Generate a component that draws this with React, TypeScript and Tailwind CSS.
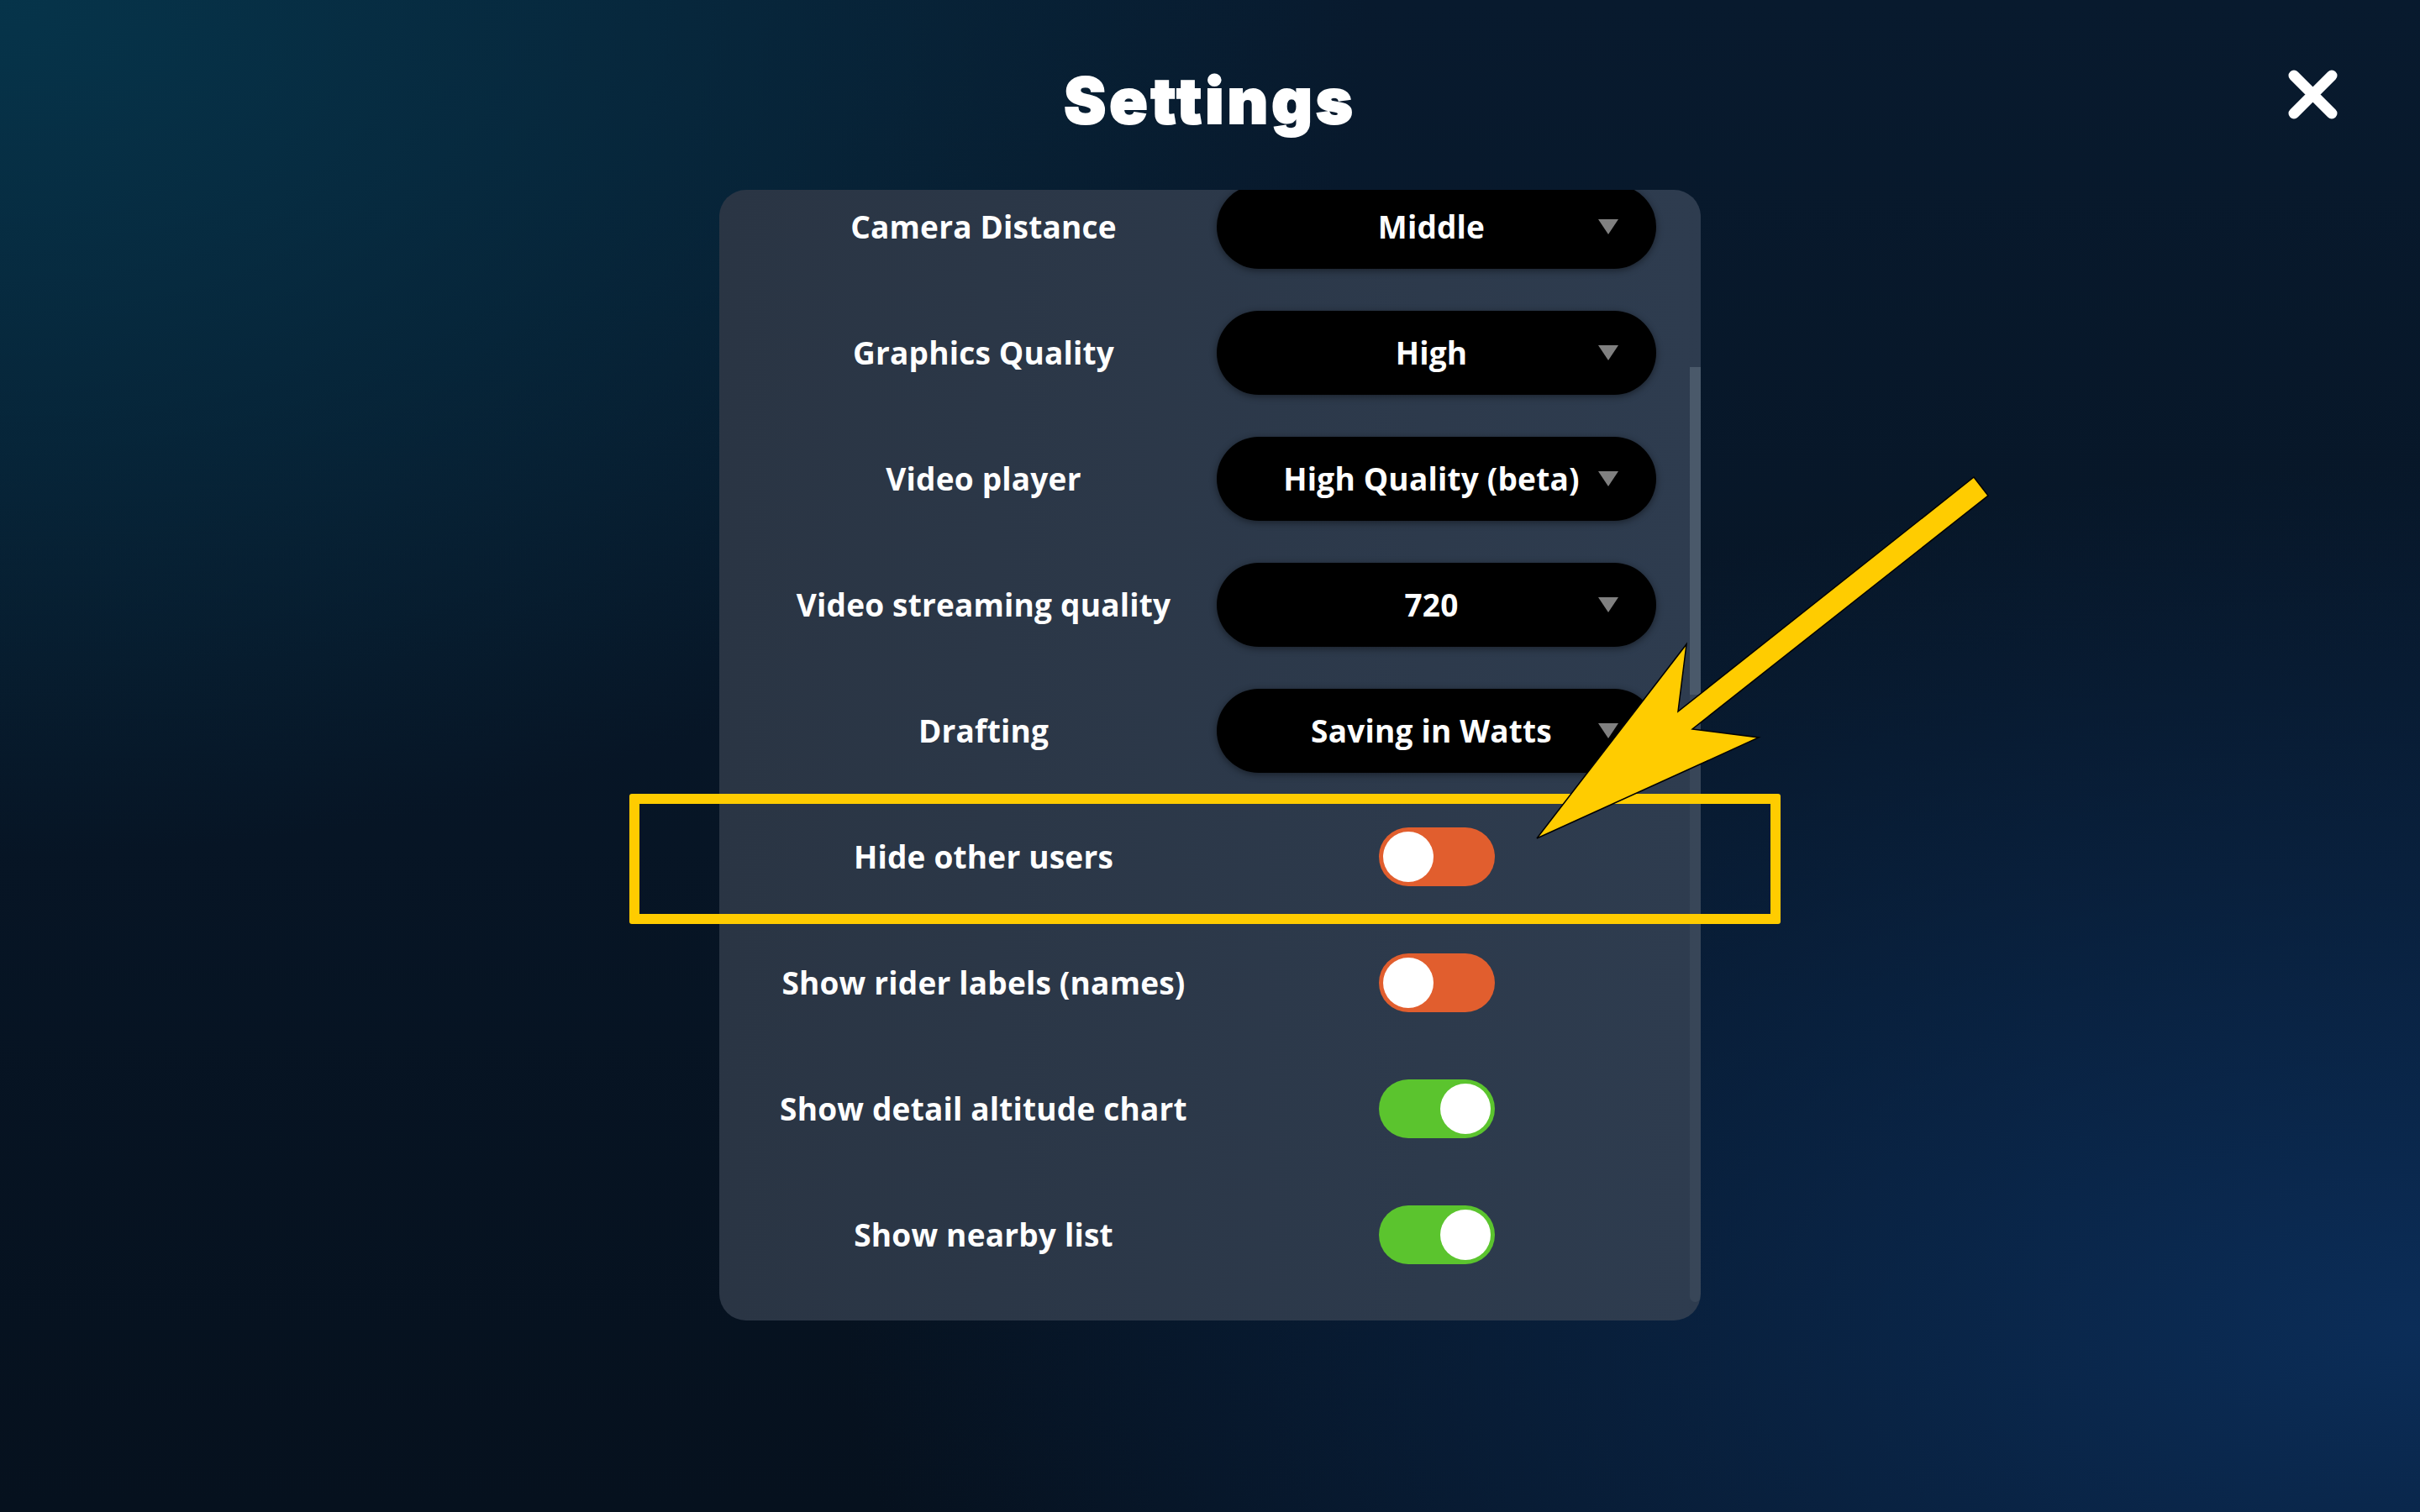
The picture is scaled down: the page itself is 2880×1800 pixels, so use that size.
type Row =
    | { label: string; kind: 'select'; value: string }
    | { label: string; kind: 'toggle'; on: boolean };

const rows: Row[] = [
    { label: 'Camera Distance', kind: 'select', value: 'Middle' },
    { label: 'Graphics Quality', kind: 'select', value: 'High' },
    { label: 'Video player', kind: 'select', value: 'High Quality (beta)' },
    { label: 'Video streaming quality', kind: 'select', value: '720' },
    { label: 'Drafting', kind: 'select', value: 'Saving in Watts' },
    { label: 'Hide other users', kind: 'toggle', on: false },
    { label: 'Show rider labels (names)', kind: 'toggle', on: false },
    { label: 'Show detail altitude chart', kind: 'toggle', on: true },
    { label: 'Show nearby list', kind: 'toggle', on: true },
];

function Select({ value }: { value: string }) {
    return (
        <div className="relative flex h-[100px] w-full items-center justify-center rounded-full bg-black pr-[12px] shadow-[0_2px_8px_rgba(0,0,0,0.45)]">
            <span className="text-[37px] font-bold tracking-[0.2px] text-white">{value}</span>
            <svg className="absolute right-[45px] top-1/2 -translate-y-1/2" width="24" height="18" viewBox="0 0 24 18">
                <polygon points="0,0 24,0 12,18" fill="#808080" />
            </svg>
        </div>
    );
}

function Toggle({ on }: { on: boolean }) {
    return (
        <div
            className={
                'flex h-[70px] w-[138px] items-center rounded-full px-[5px] ' +
                (on ? 'justify-end bg-[#5bc42e]' : 'justify-start bg-[#e15e2e]')
            }
        >
            <div className="h-[60px] w-[60px] rounded-full bg-white" />
        </div>
    );
}

export default function App() {
    return (
        <div className="relative h-[1800px] w-full overflow-hidden bg-[radial-gradient(ellipse_at_0%_0%,#06344a_0%,transparent_40%),radial-gradient(ellipse_at_100%_88%,#0b2d58_0%,transparent_46%),linear-gradient(180deg,#081a2e_0%,#06111e_100%)] font-['Open_Sans',sans-serif] text-white">
            {/* Header */}
            <div className="grid h-[226px] grid-cols-[1fr_auto_1fr]">
                <div />
                <h1 className="mt-[82px] font-['Inter',sans-serif] text-[75px] font-black leading-none tracking-[4px] [-webkit-text-stroke:2px_white]">
                    Settings
                </h1>
                <div className="flex justify-end pr-[98px] pt-[83px]">
                    <svg width="59" height="59" viewBox="0 0 59 59">
                        <path d="M7 7 L52 52 M52 7 L7 52" stroke="white" strokeWidth="13" strokeLinecap="round" />
                    </svg>
                </div>
            </div>

            {/* Panel */}
            <div className="flex justify-center">
                <div className="relative h-[1346px] w-[1168px] overflow-hidden rounded-[32px] bg-gradient-to-r from-[#2a3544] to-[#2e3c4f]">
                    <div className="mt-[-6px] grid grid-cols-2 gap-x-[16px] gap-y-[50px] px-[53px]">
                        {rows.map((r) => (
                            <div key={r.label} className="contents">
                                <div className="flex h-[100px] items-center justify-center text-center text-[37px] font-bold tracking-[0.2px]">
                                    {r.label}
                                </div>
                                <div className="flex h-[100px] items-center justify-center">
                                    {r.kind === 'select' ? <Select value={r.value} /> : <Toggle on={r.on} />}
                                </div>
                            </div>
                        ))}
                    </div>
                    {/* scrollbar */}
                    <div className="absolute bottom-[22px] right-0 top-[211px] w-[13px] rounded-b-[8px] bg-white/[0.05]">
                        <div className="h-[390px] w-full bg-[#566576]/60" />
                    </div>
                </div>
            </div>

            {/* annotation */}
            <div className="pointer-events-none absolute left-[749px] top-[945px] h-[155px] w-[1370px] rounded-[3px] border-[12px] border-[#ffcc00]" />
            <svg className="pointer-events-none absolute inset-0" width="2880" height="1800" viewBox="0 0 2880 1800">
                <polygon
                    points="2349,568 2366,590 2014,868 2093,878 1829,998 2007,767 1997,847"
                    fill="#ffcc00"
                    stroke="#000"
                    strokeWidth="1.5"
                    strokeLinejoin="miter"
                />
            </svg>
        </div>
    );
}
